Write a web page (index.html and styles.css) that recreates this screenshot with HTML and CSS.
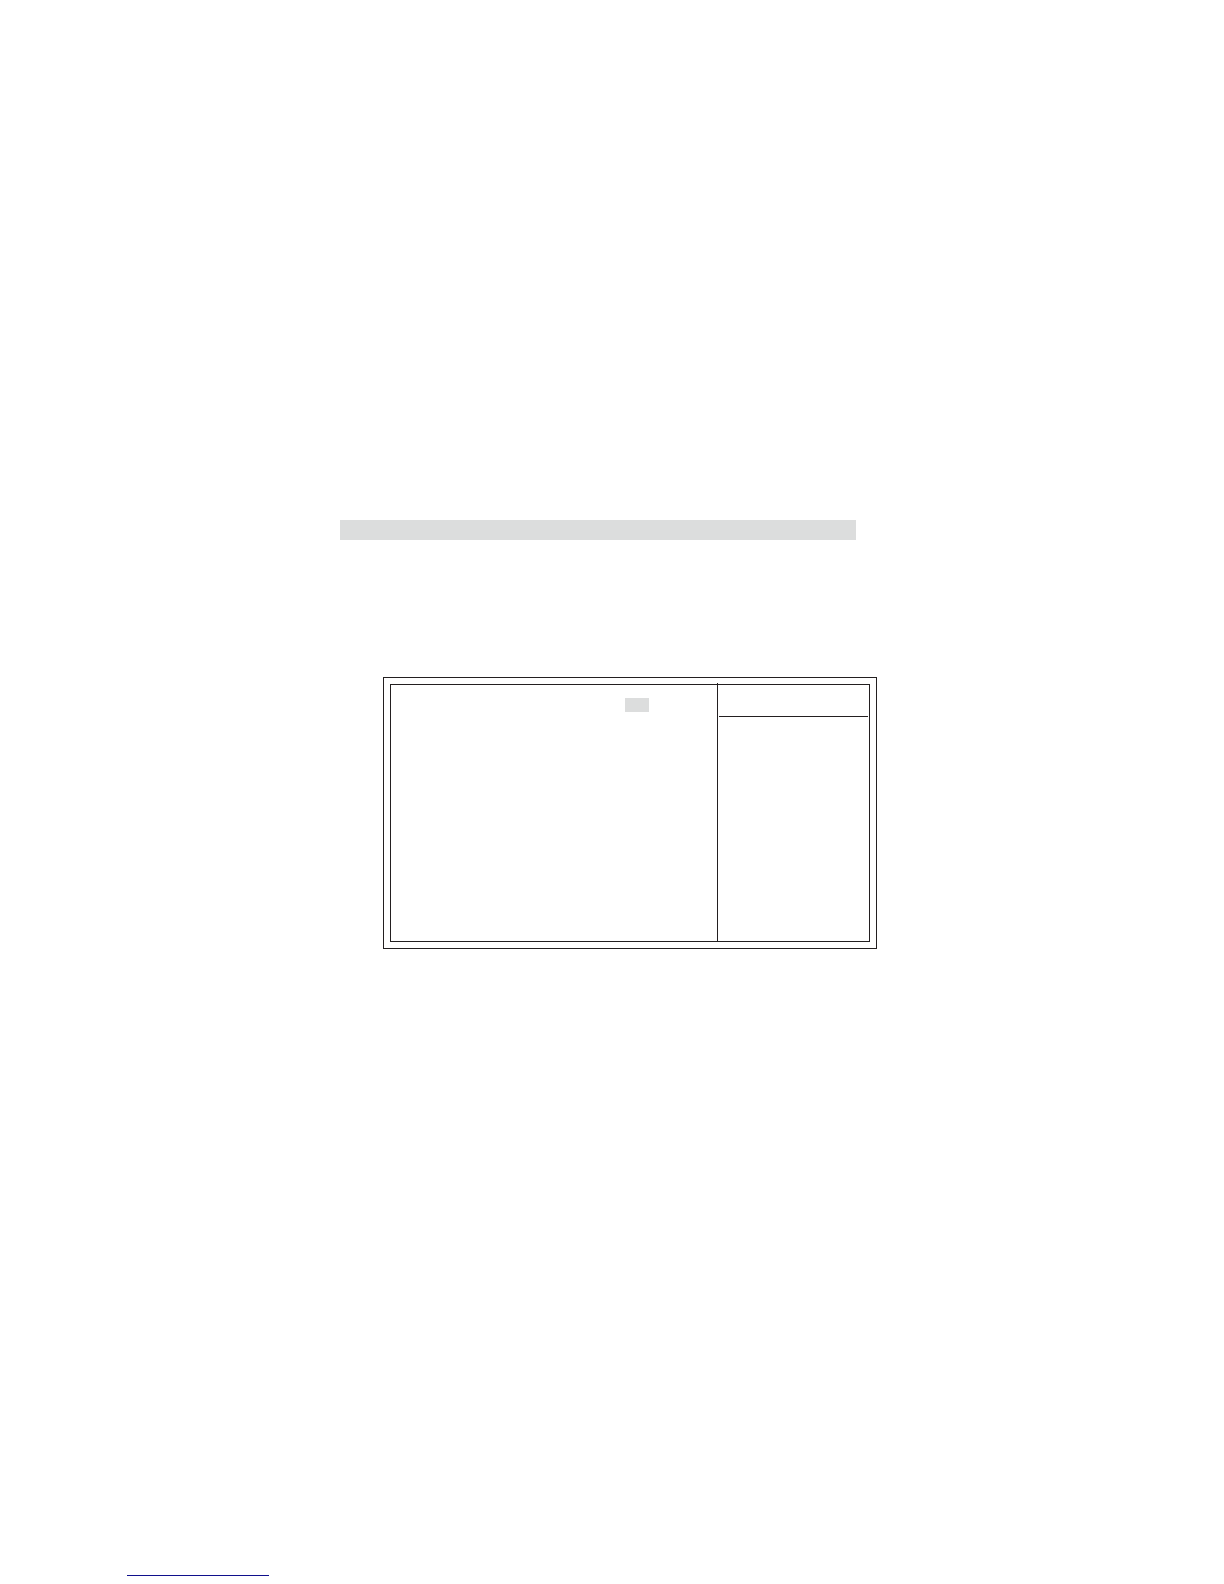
FILE: index.html
```html
<!DOCTYPE html>
<html lang="en">
<head>
<meta charset="utf-8">
<title>Setup screen</title>
<link rel="stylesheet" href="styles.css">
</head>
<body>
<main class="content">
  <div class="title-bar"></div>
  <section class="frame">
    <div class="screen">
      <div class="settings"><div class="selected-value"></div></div>
      <aside class="help"><div class="help-header"></div></aside>
    </div>
  </section>
</main>
<footer class="footer"><div class="footer-rule"></div></footer>
</body>
</html>
```
FILE: styles.css
```css
* {
  box-sizing: border-box;
}

body {
  display: flex;
  flex-direction: column;
  min-height: 100vh;
  margin: 0;
  background: #fff;
}

.content {
  padding: 520px 347px 0 340px;
}

.title-bar {
  height: 20px;
  margin-right: 21px;
  background: #dcdddd;
}

/* Double outline round the setup screen */
.frame {
  margin: 137px 0 0 43px;
  padding: 6px;
  border: 1px solid #231f20;
}

.screen {
  display: grid;
  grid-template-columns: 1fr 152px;
  min-height: 258px;
  border: 1px solid #231f20;
}

.settings {
  display: flex;
  justify-content: flex-end;
  align-items: flex-start;
  padding: 13px 68px 0 0;
}

.selected-value {
  width: 24px;
  height: 14px;
  background: #dcdddd;
}

/* The divider crosses the top outline */
.help {
  margin-top: -2px;
  padding: 0 1px;
  border-left: 1px solid #231f20;
}

.help-header {
  height: 34px;
  border-bottom: 1px solid #231f20;
}

.footer {
  margin-top: auto;
  padding: 0 127px 8px;
}

.footer-rule {
  width: 142px;
  height: 1px;
  background: #10108c;
}
```
